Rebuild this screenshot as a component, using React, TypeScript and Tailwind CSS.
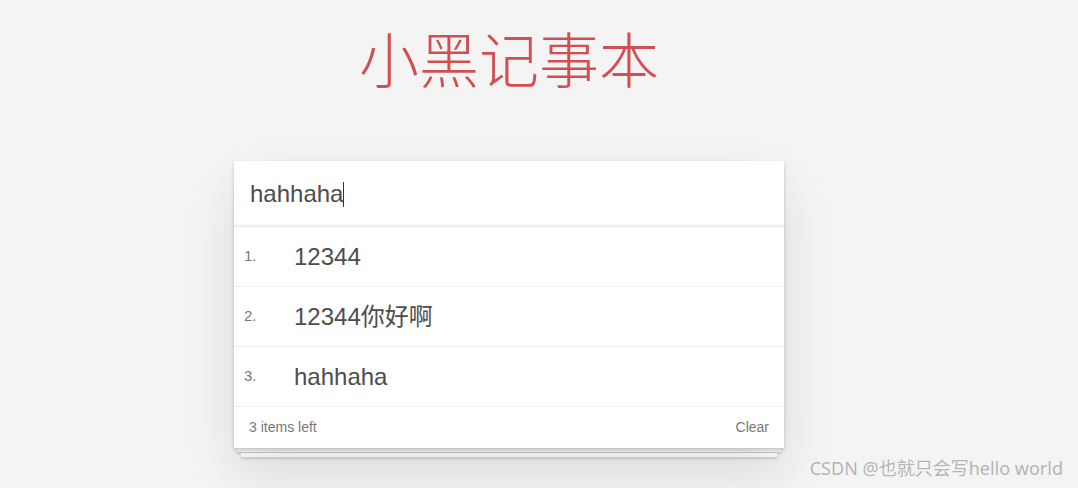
import React, { useState } from "react";

const App: React.FC = () => {
  const [todos] = useState<Array<{ id: number; name: string }>>([
    { id: 1, name: "12344" },
    { id: 2, name: "12344你好啊" },
    { id: 3, name: "hahhaha" },
  ]);
  const [value, setValue] = useState("hahhaha");

  return (
    <div className="relative min-h-[488px] w-full overflow-hidden bg-[#f4f4f4] font-['Helvetica_Neue',Arial,'Liberation_Sans','Noto_Sans_CJK_SC',sans-serif]">
      <div className="ml-[234px] w-[550px]">
        {/* 标题 */}
        <h1 className="pt-[17px] text-center font-['Noto_Sans_CJK_SC',sans-serif] text-[60px] font-light leading-[80px] text-[#d14f52]">
          小黑记事本
        </h1>

        <div className="relative mt-[64px]">
          <section className="relative z-10 bg-white shadow-[0_2px_4px_rgba(0,0,0,0.2),0_25px_50px_rgba(0,0,0,0.1)]">
            {/* 输入框 */}
            <div className="relative h-[66px] border-b border-[#e6e6e6] shadow-[inset_0_-2px_1px_rgba(0,0,0,0.03)]">
              <input
                value={value}
                onChange={(e) => setValue(e.target.value)}
                className="h-full w-full bg-transparent pl-4 text-[24px] text-[#4d4d4d] outline-none"
              />
              <span className="absolute left-[109px] top-[21px] h-[25px] w-px bg-[#333]" />
            </div>

            {/* 列表 */}
            <ul>
              {todos.map((todo, index) => (
                <li key={todo.id} className="flex h-[60px] items-center border-b border-[#ededed]">
                  <span className="w-[60px] pl-[10px] text-[15px] text-[#777]">{index + 1}.</span>
                  <label className="text-[24px] text-[#4d4d4d]">{todo.name}</label>
                </li>
              ))}
            </ul>

            {/* 统计和清空 */}
            <footer className="flex h-[41px] items-center justify-between px-[15px] text-[14px] text-[#777]">
              <span>{todos.length} items left</span>
              <button className="text-[14px] text-[#777]">Clear</button>
            </footer>
          </section>
          <div className="mx-[3px] h-[5px] border-b border-[#d6d6d6] bg-white shadow-[0_1px_2px_rgba(0,0,0,0.15)]" />
          <div className="mx-[7px] h-[5px] border-b border-[#d6d6d6] bg-white shadow-[0_1px_3px_rgba(0,0,0,0.15)]" />
        </div>
      </div>

      <div className="absolute bottom-[6px] right-[15px] font-['Noto_Sans','Noto_Sans_CJK_SC',sans-serif] text-[18px] text-[#b4b4b4] [text-shadow:0_0_1px_rgba(255,255,255,0.9)]">
        CSDN @也就只会写hello world
      </div>
    </div>
  );
};

export default App;
